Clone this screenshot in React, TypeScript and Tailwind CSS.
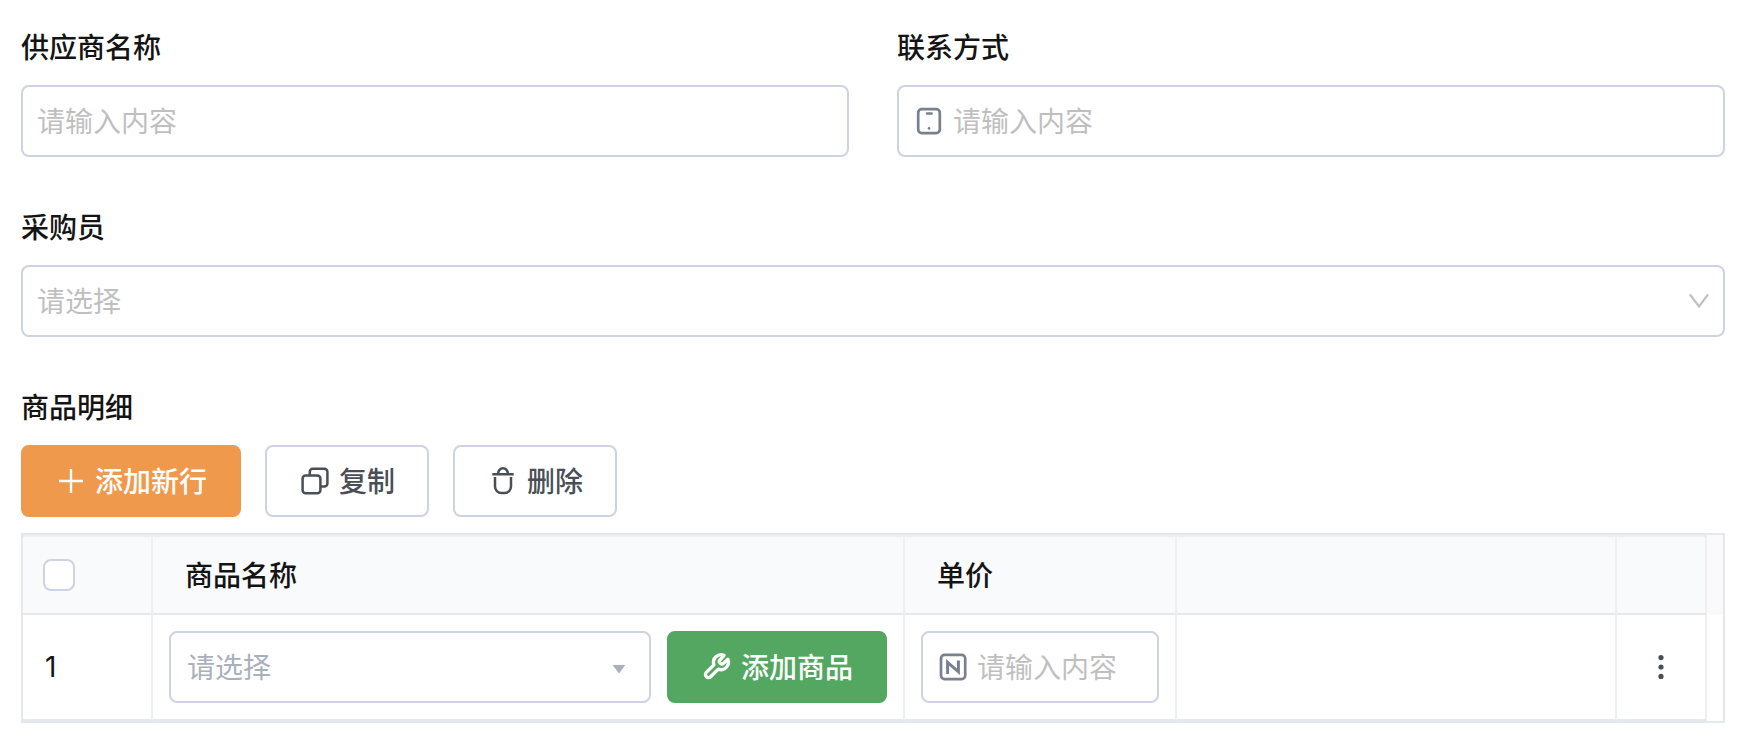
import React, { useState } from 'react';

const columns = [
    { key: 'name', title: '商品名称' },
    { key: 'price', title: '单价' },
    { key: 'blank', title: '' },
    { key: 'actions', title: '' },
];

type IconProps = { className?: string; children: React.ReactNode };

const Icon: React.FC<IconProps> = ({ className = '', children }) => (
    <svg
        className={`w-8 h-8 shrink-0 ${className}`}
        viewBox="0 0 32 32"
        fill="none"
        stroke="currentColor"
        strokeWidth="2.5"
        aria-hidden="true"
    >
        {children}
    </svg>
);

const PlusIcon = () => (
    <Icon>
        <path d="M16 4v24M4 16h24" strokeWidth="2.4" />
    </Icon>
);

const CopyIcon = () => (
    <Icon>
        <rect x="3.6" y="10.4" width="17.8" height="17.8" rx="3" />
        <path d="M10.8 10V6.8a3 3 0 0 1 3-3h11.6a3 3 0 0 1 3 3v11.6a3 3 0 0 1-3 3h-3.6" />
    </Icon>
);

const TrashIcon = () => (
    <Icon>
        <path d="M5.3 9.2h21.4M10.9 9c.5-3.5 2.3-5.8 5.1-5.8s4.6 2.3 5.1 5.8" />
        <path d="M8 12v9.6a6.4 6.4 0 0 0 6.4 6.4h3.2a6.4 6.4 0 0 0 6.4-6.4V12" />
    </Icon>
);

const PhoneIcon = () => (
    <Icon className="text-[#79818f]">
        <rect x="5.2" y="4.1" width="21.6" height="24" rx="3.6" strokeWidth="2.7" />
        <path d="M14 8.6h4.6" strokeLinecap="round" />
        <circle cx="16" cy="23.4" r="1.3" fill="currentColor" stroke="none" />
    </Icon>
);

const NumberIcon = () => (
    <Icon className="text-[#79818f]">
        <rect x="4" y="3.9" width="24.2" height="24.2" rx="3.6" strokeWidth="2.7" />
        <path d="M10.6 23V11.4l10.8 9.4V9.6" strokeWidth="3" />
    </Icon>
);

const WrenchIcon = () => (
    <svg
        className="w-8 h-8 shrink-0"
        viewBox="-1 -1.5 27 27"
        fill="none"
        stroke="currentColor"
        strokeWidth="2.8"
        strokeLinejoin="round"
        aria-hidden="true"
    >
        <path d="M14.9 6.2a1.6 1.6 0 0 0 0 2.2l.7.7a1.6 1.6 0 0 0 2.2 0l3.9-3.7a6.4 6.4 0 0 1-8.2 8.4l-6.4 6.4a2.5 2.5 0 0 1-3.6-3.6l6.4-6.4a6.4 6.4 0 0 1 8.6-8z" />
    </svg>
);

type TextFieldProps = { id: string; icon?: React.ReactNode; label?: string };

const TextField: React.FC<TextFieldProps> = ({ id, icon, label }) => (
    <div className="flex items-center gap-2 h-18 px-3.5 border-2 border-[#cdd3e2] rounded-lg bg-white">
        {icon}
        <input
            id={id}
            type="text"
            aria-label={label}
            placeholder="请输入内容"
            className="flex-1 min-w-0 h-full placeholder:text-[#bfbfbf] outline-none"
        />
    </div>
);

const FieldLabel: React.FC<{ htmlFor: string; children: React.ReactNode }> = ({ htmlFor, children }) => (
    <label htmlFor={htmlFor} className="block mb-4 leading-11 font-medium">
        {children}
    </label>
);

const App: React.FC = () => {
    const [checked, setChecked] = useState(false);

    return (
        <main className="pt-[25px] pb-[23px] pl-[21px] pr-[23px] bg-white text-[28px] leading-11 text-[#141414] font-['Noto_Sans','Noto_Sans_CJK_SC',sans-serif]">
            <form className="flex flex-col gap-12">
                <div className="grid grid-cols-2 gap-12">
                    <div>
                        <FieldLabel htmlFor="supplier">供应商名称</FieldLabel>
                        <TextField id="supplier" />
                    </div>
                    <div>
                        <FieldLabel htmlFor="contact">联系方式</FieldLabel>
                        <TextField id="contact" icon={<PhoneIcon />} />
                    </div>
                </div>

                <div>
                    <FieldLabel htmlFor="buyer">采购员</FieldLabel>
                    <div className="relative">
                        <select
                            id="buyer"
                            className="block w-full h-18 px-3.5 border-2 border-[#cdd3e2] rounded-lg bg-white text-[#bfbfbf] appearance-none outline-none"
                        >
                            <option>请选择</option>
                        </select>
                        <svg
                            className="absolute right-4 top-1/2 -translate-y-1/2 w-5 h-4 text-[#bfbfbf] pointer-events-none"
                            viewBox="0 0 20 16"
                            fill="none"
                            stroke="currentColor"
                            strokeWidth="2.2"
                            aria-hidden="true"
                        >
                            <path d="M.9 1.4l9.1 12L19.1 1.4" />
                        </svg>
                    </div>
                </div>

                {/* 商品明细 */}
                <section>
                    <h2 className="mb-4 leading-11 font-medium">商品明细</h2>

                    <div className="flex gap-6 mb-4">
                        <button
                            type="button"
                            className="flex items-center gap-2 h-18 px-8 border-2 border-[#ef994d] rounded-lg bg-[#ef994d] font-medium text-white"
                        >
                            <PlusIcon />
                            添加新行
                        </button>
                        <button
                            type="button"
                            className="flex items-center gap-2 h-18 px-8 border-2 border-[#cdd3e2] rounded-lg bg-white font-medium text-[#4a4f57]"
                        >
                            <CopyIcon />
                            复制
                        </button>
                        <button
                            type="button"
                            className="flex items-center gap-2 h-18 px-8 border-2 border-[#cdd3e2] rounded-lg bg-white font-medium text-[#4a4f57]"
                        >
                            <TrashIcon />
                            删除
                        </button>
                    </div>

                    <div className="flex border-2 border-[#e5e9ee]">
                        <table className="flex-1 table-fixed w-full border-separate border-spacing-0 border-t-2 border-[#eceef0]">
                            <colgroup>
                                <col className="w-[130px]" />
                                <col className="w-[752px]" />
                                <col className="w-[272px]" />
                                <col />
                                <col className="w-[90px]" />
                            </colgroup>
                            <thead>
                                <tr className="h-[78px] bg-[#f8fafc]">
                                    <th className="pl-5 border-r-2 border-b-2 border-r-[#eeeff0] border-b-[#e5e9ee]">
                                        <input
                                            type="checkbox"
                                            aria-label="全选"
                                            checked={checked}
                                            onChange={e => setChecked(e.target.checked)}
                                            className="block w-8 h-8 border-2 border-[#cdd3e2] rounded-lg bg-white appearance-none checked:bg-[#ef994d]"
                                        />
                                    </th>
                                    {columns.map(col => (
                                        <th
                                            key={col.key}
                                            className="px-8 border-r-2 border-b-2 border-r-[#eeeff0] border-b-[#e5e9ee] text-left font-medium"
                                        >
                                            {col.title}
                                        </th>
                                    ))}
                                </tr>
                            </thead>
                            <tbody>
                                <tr>
                                    <td className="pl-[22px] border-r-2 border-b-2 border-r-[#eeeff0] border-b-[#e5e9ee] font-[Inter,sans-serif]">1</td>
                                    <td className="p-4 border-r-2 border-b-2 border-r-[#eeeff0] border-b-[#e5e9ee]">
                                        <div className="flex gap-4">
                                            <div className="relative flex-1">
                                                <select
                                                    aria-label="商品名称"
                                                    className="block w-full h-18 px-4 border-2 border-[#cdd3e2] rounded-lg bg-white text-[#a9b0bc] appearance-none outline-none"
                                                >
                                                    <option>请选择</option>
                                                </select>
                                                <svg
                                                    className="absolute right-6 top-8 w-4 h-3 text-[#a9b0bc] pointer-events-none"
                                                    viewBox="0 0 16 12"
                                                    fill="currentColor"
                                                    aria-hidden="true"
                                                >
                                                    <path d="M1.6 2h12.8L8 10.6z" />
                                                </svg>
                                            </div>
                                            <button
                                                type="button"
                                                className="flex items-center gap-2 h-18 px-8 border-2 border-[#53a761] rounded-lg bg-[#53a761] font-medium text-white"
                                            >
                                                <WrenchIcon />
                                                添加商品
                                            </button>
                                        </div>
                                    </td>
                                    <td className="p-4 border-r-2 border-b-2 border-r-[#eeeff0] border-b-[#e5e9ee]">
                                        <TextField id="price" label="单价" icon={<NumberIcon />} />
                                    </td>
                                    <td className="border-r-2 border-b-2 border-r-[#eeeff0] border-b-[#e5e9ee]" />
                                    <td className="border-r-2 border-b-2 border-r-[#eeeff0] border-b-[#e5e9ee]">
                                        <button type="button" aria-label="更多" className="block mx-auto text-[#4a4f57]">
                                            <Icon>
                                                <g fill="currentColor" stroke="none">
                                                    <circle cx="16" cy="6.6" r="2.6" />
                                                    <circle cx="16" cy="16" r="2.6" />
                                                    <circle cx="16" cy="25.4" r="2.6" />
                                                </g>
                                            </Icon>
                                        </button>
                                    </td>
                                </tr>
                            </tbody>
                        </table>
                        {/* 滚动条占位 */}
                        <div className="w-4 shrink-0">
                            <div className="h-20 bg-[#fafafa]" />
                        </div>
                    </div>
                </section>
            </form>
        </main>
    );
};

export default App;
